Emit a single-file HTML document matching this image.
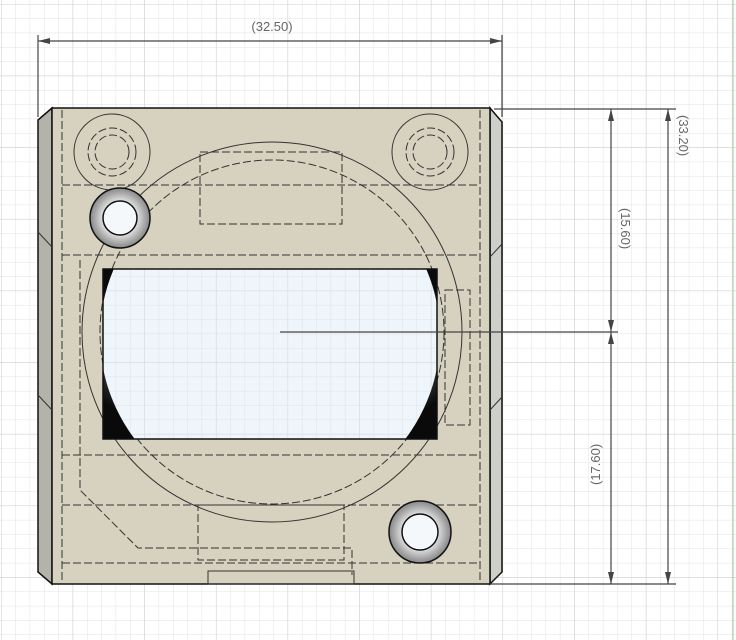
<!DOCTYPE html>
<html><head><meta charset="utf-8"><style>
html,body{margin:0;padding:0;background:#fff;}
svg{display:block}
text{font-family:"Liberation Sans",sans-serif;font-size:13px;fill:#666}
</style></head><body>
<svg width="736" height="640" viewBox="0 0 736 640" xmlns="http://www.w3.org/2000/svg">
<defs>
<pattern id="g" x="1" y="4" width="14.33" height="14.33" patternUnits="userSpaceOnUse">
<path d="M0 0V14.33M0 0H14.33" stroke="#e2e2e2" stroke-width="1" fill="none"/>
</pattern>
<pattern id="G" x="1" y="4" width="71.65" height="71.65" patternUnits="userSpaceOnUse">
<path d="M0 0V71.65M0 0H71.65" stroke="#cdcdcd" stroke-width="1" fill="none"/>
</pattern>
<radialGradient id="ring" cx="0.5" cy="0.5" r="0.5">
<stop offset="0.5" stop-color="#f0f0f0"/><stop offset="0.8" stop-color="#b0b0b0"/><stop offset="1" stop-color="#888"/>
</radialGradient>
<radialGradient id="blk" cx="0.5" cy="0.45" r="0.6">
<stop offset="0.7" stop-color="#555"/><stop offset="1" stop-color="#0a0a0a"/>
</radialGradient>
<clipPath id="win"><rect x="103" y="269" width="334" height="170"/></clipPath>
<clipPath id="bore"><circle cx="270" cy="336" r="170"/></clipPath>
</defs>
<rect width="736" height="640" fill="url(#g)"/>
<rect width="736" height="640" fill="url(#G)"/>
<line x1="733" y1="0" x2="733" y2="640" stroke="#9c9"/>
<!-- body -->
<polygon points="52,108 38,120 38,572 52,584" fill="#b3b3a9" stroke="#111" stroke-width="1.5"/>
<polygon points="490,108 502,122 502,572 490,584" fill="#cfcfca" stroke="#111" stroke-width="1.5"/>
<rect x="52" y="108" width="438" height="476" fill="#d7d1bf" stroke="#111" stroke-width="1.5"/>
<g fill="none" stroke="#333" stroke-width="1" stroke-dasharray="8,3">
<line x1="62" y1="110" x2="62" y2="580"/>
<line x1="480" y1="110" x2="480" y2="580"/>
<line x1="62" y1="185" x2="480" y2="185"/>
<line x1="62" y1="255" x2="480" y2="255"/>
<line x1="62" y1="455" x2="480" y2="455"/>
<line x1="62" y1="505" x2="480" y2="505"/>
<line x1="62" y1="563" x2="480" y2="563"/>
<rect x="200" y="152" width="142" height="72"/>
<polyline points="80,260 80,490 138,548 352,548 352,575"/>
<rect x="198" y="505" width="146" height="55"/>
<rect x="445" y="290" width="25" height="135"/>
<circle cx="112" cy="152" r="24"/>
<circle cx="112" cy="152" r="17"/>
<circle cx="430" cy="152" r="24"/>
<circle cx="430" cy="152" r="17"/>
<circle cx="272" cy="332" r="172"/>
</g>
<g fill="none" stroke="#333" stroke-width="1">
<circle cx="112" cy="152" r="38"/>
<circle cx="430" cy="152" r="38"/>
<circle cx="272" cy="332" r="190"/>
<polyline points="38,395 52,410"/><polyline points="38,232 52,247"/>
<polyline points="502,397 490,410"/><polyline points="502,244 490,257"/>
<rect x="208" y="571" width="146" height="13"/>
</g>
<!-- window -->
<rect x="103" y="269" width="334" height="170" fill="url(#blk)" stroke="#111"/>
<g clip-path="url(#win)">
<g clip-path="url(#bore)">
<rect x="90" y="160" width="360" height="360" fill="#eef5fb"/>
<rect x="90" y="160" width="360" height="360" fill="url(#g)"/>
<rect x="90" y="160" width="360" height="360" fill="url(#G)" opacity="0.6"/>
</g>
</g>
<rect x="103" y="269" width="334" height="170" fill="none" stroke="#111" stroke-width="1.5"/>
<!-- holes -->
<circle cx="120" cy="218" r="30" fill="url(#ring)" stroke="#111" stroke-width="1.5"/>
<circle cx="120" cy="218" r="17" fill="#f4f8fb" stroke="#111" stroke-width="1.5"/>
<circle cx="420" cy="532" r="31" fill="url(#ring)" stroke="#111" stroke-width="1.5"/>
<circle cx="420" cy="532" r="18" fill="#f4f8fb" stroke="#111" stroke-width="1.5"/>
<!-- dims -->
<g stroke="#444" stroke-width="1.2" fill="none">
<line x1="38" y1="35" x2="38" y2="117"/>
<line x1="502" y1="35" x2="502" y2="117"/>
<line x1="38" y1="41" x2="502" y2="41"/>
<line x1="494" y1="109" x2="676" y2="109"/>
<line x1="490" y1="584" x2="676" y2="584"/>
<line x1="668" y1="109" x2="668" y2="584"/>
<line x1="611" y1="109" x2="611" y2="584"/>
<line x1="280" y1="332" x2="618" y2="332"/>
</g>
<g fill="#444">
<polygon points="38,41 50,38 50,44"/><polygon points="502,41 490,38 490,44"/>
<polygon points="668,109 665,121 671,121"/><polygon points="668,584 665,572 671,572"/>
<polygon points="611,109 608,121 614,121"/><polygon points="611,332 608,320 614,320"/>
<polygon points="611,332 608,344 614,344"/><polygon points="611,584 608,572 614,572"/>
</g>
<text x="272" y="31" text-anchor="middle">(32.50)</text>
<text transform="translate(679,115) rotate(90)">(33.20)</text>
<text transform="translate(621,208) rotate(90)">(15.60)</text>
<text transform="translate(600,485) rotate(-90)">(17.60)</text>
</svg>
</body></html>
